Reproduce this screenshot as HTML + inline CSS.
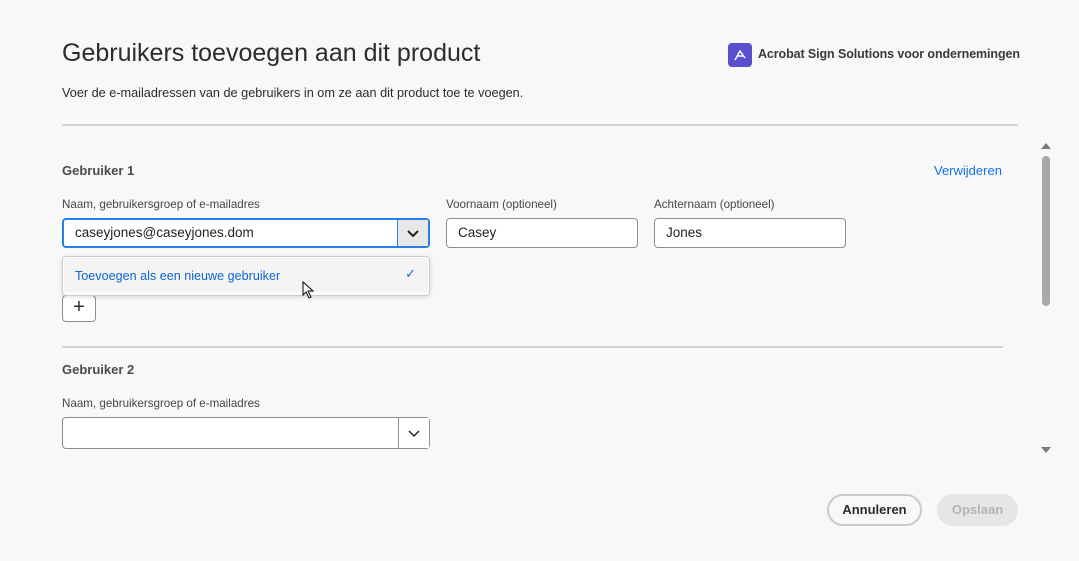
<!DOCTYPE html>
<html><head><meta charset="utf-8"><style>
body{margin:0;width:1079px;height:561px;background:#f8f8f8;font-family:"Liberation Sans",sans-serif;color:#2c2c2c;position:relative;overflow:hidden}
.a{position:absolute}
.lbl{font-size:11.6px;color:#464646}
.inp{position:absolute;height:30px;border:1px solid #8e8e8e;border-radius:4px;background:#fff;box-sizing:border-box;font-size:13.5px;line-height:28px;padding-left:11px;color:#222}
.btn{position:absolute;width:31px;height:30px;box-sizing:border-box;border-left:1px solid #8e8e8e;background:#f0f0f0;right:0;top:0}
.hd{font-size:13px;font-weight:bold;color:#4b4b4b}
</style></head><body>
<div class="a" style="left:62px;top:39px;font-size:25px;color:#2c2c2c">Gebruikers toevoegen aan dit product</div>
<div class="a" style="left:62px;top:86px;font-size:12.7px;color:#2c2c2c">Voer de e-mailadressen van de gebruikers in om ze aan dit product toe te voegen.</div>
<div class="a" style="left:728px;top:43px;width:24px;height:24px;border-radius:4px;background:#5a4fcf"><svg width="24" height="24"><path d="M7 17 L12 8 L17 15 M9 13 L16 13" stroke="#fff" stroke-width="1.5" fill="none"/></svg></div>
<div class="a" style="left:758px;top:47px;font-size:12.5px;font-weight:bold;color:#3a3a3a;letter-spacing:-0.1px">Acrobat Sign Solutions voor ondernemingen</div>
<div class="a" style="left:62px;top:124px;width:956px;height:2px;background:#d4d4d4"></div>
<div class="a hd" style="left:62px;top:163px">Gebruiker 1</div>
<div class="a" style="left:934px;top:163px;font-size:13px;color:#1473e6">Verwijderen</div>
<div class="a lbl" style="left:62px;top:198px">Naam, gebruikersgroep of e-mailadres</div>
<div class="a lbl" style="left:446px;top:198px">Voornaam (optioneel)</div>
<div class="a lbl" style="left:654px;top:198px">Achternaam (optioneel)</div>
<div class="inp" style="left:62px;top:218px;width:368px;border:2px solid #2680eb;line-height:26px">caseyjones@caseyjones.dom<div class="btn" style="top:-0px;height:26px;border-left:1px solid #2680eb;background:#e8e8e8"><svg width="30" height="26"><path d="M10 11 L15 16 L20 11" stroke="#222" stroke-width="2" fill="none"/></svg></div></div>
<div class="inp" style="left:446px;top:218px;width:192px">Casey</div>
<div class="inp" style="left:654px;top:218px;width:192px">Jones</div>
<div class="a" style="left:62px;top:295px;width:34px;height:27px;border:1px solid #8e8e8e;border-radius:4px;box-sizing:border-box;background:#fff;text-align:center;font-size:20px;line-height:23px">+</div>
<div class="a" style="left:62px;top:256px;width:368px;height:40px;border:1px solid #cacaca;border-radius:4px;background:#fff;box-sizing:border-box;box-shadow:0 1px 4px rgba(0,0,0,.15)"><div style="position:absolute;left:1px;right:1px;top:1px;height:34px;background:#f4f4f4"></div><div style="position:absolute;left:12px;top:12px;font-size:12.6px;color:#0d66d0">Toevoegen als een nieuwe gebruiker</div><div style="position:absolute;right:13px;top:9px;font-size:13px;color:#0d66d0">✓</div></div>
<svg class="a" style="left:302px;top:281px" width="14" height="18"><path d="M1 1 L1 14 L4 11 L7 17 L9 16 L6 10 L11 10 Z" fill="#fff" stroke="#000"/></svg>
<div class="a" style="left:62px;top:346px;width:941px;height:2px;background:#d4d4d4"></div>
<div class="a hd" style="left:62px;top:362px">Gebruiker 2</div>
<div class="a lbl" style="left:62px;top:397px">Naam, gebruikersgroep of e-mailadres</div>
<div class="inp" style="left:62px;top:417px;width:368px;height:32px"><div class="btn" style="height:30px;background:#fff"><svg width="30" height="30"><path d="M10 13 L15 18 L20 13" stroke="#222" stroke-width="1.5" fill="none"/></svg></div></div>
<div class="a" style="left:1041px;top:143px;width:0;height:0;border:5px solid transparent;border-bottom:6px solid #7a7a7a;border-top:0"></div>
<div class="a" style="left:1042px;top:156px;width:8px;height:150px;border-radius:4px;background:#a8a8a8"></div>
<div class="a" style="left:1041px;top:447px;width:0;height:0;border:5px solid transparent;border-top:6px solid #7a7a7a;border-bottom:0"></div>
<div class="a" style="left:827px;top:494px;width:95px;height:32px;border:2px solid #cacaca;border-radius:16px;box-sizing:border-box;text-align:center;line-height:28px;font-size:13px;font-weight:bold;color:#2c2c2c;background:#f8f8f8">Annuleren</div>
<div class="a" style="left:937px;top:494px;width:81px;height:32px;border-radius:16px;background:#e6e6e6;text-align:center;line-height:32px;font-size:13px;font-weight:bold;color:#b3b3b3">Opslaan</div>
</body></html>
